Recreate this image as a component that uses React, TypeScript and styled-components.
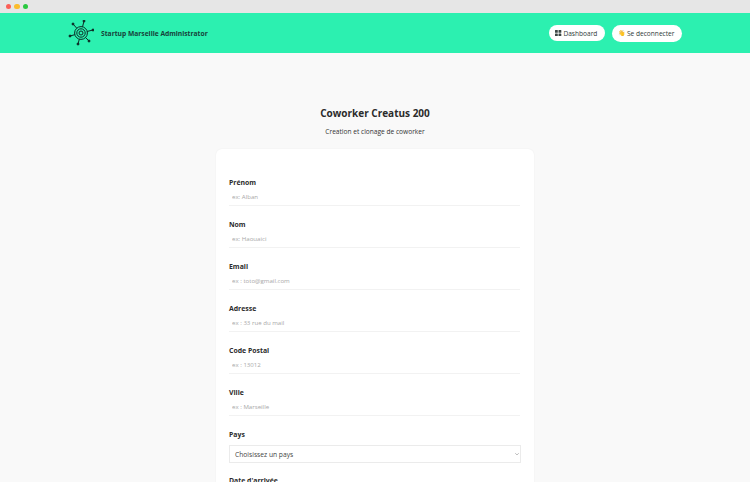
import React from "react";
import styled, { createGlobalStyle } from "styled-components";

const Global = createGlobalStyle`
  html, body { margin: 0; padding: 0; height: 482px; overflow: hidden; background: #f9f9f9; }
  body { font-family: "Open Sans", "Liberation Sans", sans-serif; color: #2b2b2b; }
  * { box-sizing: border-box; }
`;

const WindowBar = styled.div`
  height: 13px; background: #e6e6e6; display: flex; align-items: center; gap: 3px; padding-left: 5.5px;
`;
const Dot = styled.span<{ $c: string }>`
  width: 5.5px; height: 5.5px; border-radius: 50%; background: ${p => p.$c};
`;
const Header = styled.header`
  height: 40px; background: #2cf0b0; display: flex; align-items: center; justify-content: space-between;
  padding: 0 68px;
`;
const Brand = styled.div`
  display: flex; align-items: center; gap: 7px;
  font-size: 6.7px; font-weight: 700; color: #17423a;
`;
const Actions = styled.div`display: flex; align-items: center; gap: 7px;`;
const Pill = styled.button<{ $h: number }>`
  height: ${p => p.$h}px; border: 0; border-radius: 9px; background: #fff; color: #2f3a38;
  font-family: inherit; font-size: 6.6px; padding: 0 7.5px 0 6.5px; display: flex; align-items: center; gap: 1.5px;
`;
const Wave = styled.span`font-size: 6px; line-height: 1;`;
const Main = styled.main`
  display: flex; flex-direction: column; align-items: center; padding-top: 53px;
`;
const Title = styled.h1`
  margin: 0; font-size: 10px; line-height: 14px; font-weight: 700; color: #2b2b2b;
`;
const Subtitle = styled.p`
  margin: 5px 0 0; font-size: 6.6px; line-height: 14px; color: #333;
`;
const Card = styled.form`
  margin-top: 10px; width: 318px; background: #fff; border-radius: 6px;
  box-shadow: 0 0 2px rgba(0,0,0,.06); padding: 27px 14px 20px 13px;
  display: flex; flex-direction: column;
`;
const Field = styled.div<{ $h?: number }>`
  height: ${p => p.$h ?? 42}px; display: flex; flex-direction: column;
`;
const Label = styled.label`
  padding-top: 2px; box-sizing: content-box;
  font-size: 6.9px; line-height: 10px; font-weight: 700; color: #2b2b2b;
`;
const TextInput = styled.input`
  margin-top: 0; width: 100%; height: 18px; padding: 0 3px 1px; border: 0; border-bottom: 1px solid #f2f2f2; outline: 0;
  font-family: inherit; font-size: 6.1px; background: transparent;
  &::placeholder { color: #a8a8a8; opacity: 1; }
`;
const SelectBox = styled.div`
  margin-top: 5px; width: 292px; height: 18px; border: 1px solid #ebebeb; background: #fff;
  display: flex; align-items: center; justify-content: space-between; padding: 0 0 0 5px;
  font-size: 6.7px; color: #444;
`;

const Logo = () => (
  <svg width="26" height="26" viewBox="0 0 26 26" fill="none" stroke="#0c2a25" strokeWidth="1">
    <circle cx="13" cy="13" r="6.4" />
    <circle cx="13" cy="13" r="4.2" />
    <circle cx="13" cy="13" r="2" />
    {[[5, 4], [16, 1], [25, 10], [2, 16], [10, 24], [21, 21]].map(([x, y]) => {
      const d = Math.hypot(x - 13, y - 13);
      return (
        <React.Fragment key={`${x}-${y}`}>
          <line x1={13 + ((x - 13) / d) * 6.4} y1={13 + ((y - 13) / d) * 6.4} x2={x} y2={y} />
          <circle cx={x} cy={y} r="1" fill="#0c2a25" />
        </React.Fragment>
      );
    })}
  </svg>
);

const Grid = () => (
  <svg width="6.5" height="6.5" viewBox="0 0 7 7" fill="#3b4644">
    <rect width="3" height="3" rx=".4" /><rect x="3.8" width="3" height="3" rx=".4" />
    <rect y="3.8" width="3" height="3" rx=".4" /><rect x="3.8" y="3.8" width="3" height="3" rx=".4" />
  </svg>
);

const Chevron = () => (
  <svg width="6" height="6" viewBox="0 0 7 7" fill="none" stroke="#999" strokeWidth=".8">
    <path d="M1.5 2.6 3.5 4.6 5.5 2.6" />
  </svg>
);

const fields = [
  ["Prénom", "ex: Alban"],
  ["Nom", "ex: Haouaici"],
  ["Email", "ex : toto@gmail.com"],
  ["Adresse", "ex : 33 rue du mail"],
  ["Code Postal", "ex : 13012"],
  ["Ville", "ex : Marseille"],
];

export default function App() {
  return (
    <>
      <Global />
      <WindowBar>
        <Dot $c="#fb5f57" /><Dot $c="#fbbd2e" /><Dot $c="#29c840" />
      </WindowBar>
      <Header>
        <Brand><Logo /><span>Startup Marseille Administrator</span></Brand>
        <Actions>
          <Pill type="button" $h={16}><Grid />Dashboard</Pill>
          <Pill type="button" $h={17}><Wave>👋</Wave>Se deconnecter</Pill>
        </Actions>
      </Header>
      <Main>
        <Title>Coworker Creatus 200</Title>
        <Subtitle>Creation et clonage de coworker</Subtitle>
        <Card>
          {fields.map(([label, ph]) => (
            <Field key={label}>
              <Label>{label}</Label>
              <TextInput placeholder={ph} />
            </Field>
          ))}
          <Field $h={46}>
            <Label>Pays</Label>
            <SelectBox>Choisissez un pays<Chevron /></SelectBox>
          </Field>
          <Field>
            <Label>Date d'arrivée</Label>
          </Field>
        </Card>
      </Main>
    </>
  );
}
